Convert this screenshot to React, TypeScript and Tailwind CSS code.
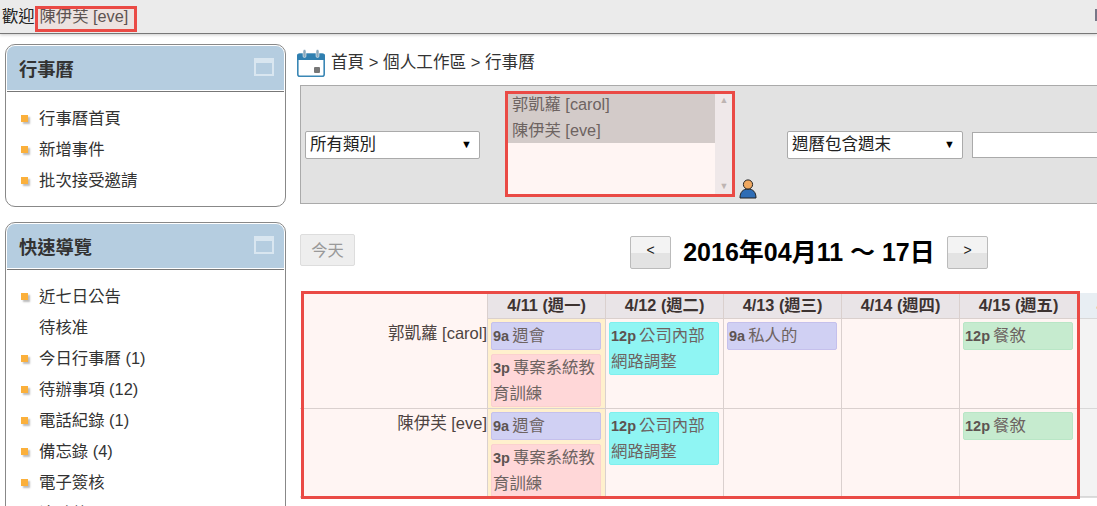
const cjk = "font-['Liberation_Sans','Noto_Sans_CJK_TC',sans-serif]";

function PanelIcon() {
  return (
    <span className="w-[20px] h-[18px] mb-[3px] border-2 border-[#d9e6f0] flex flex-col">
      <span className="h-[3px] bg-[#d9e6f0]" />
    </span>
  );
}

function Panel({ title, items, className }: { title: string; items: { label: string; noBullet?: boolean }[]; className?: string }) {
  return (
    <div className={`w-[281px] border border-[#888] rounded-[10px] bg-white p-px ${className ?? ''}`}>
      <div className="h-[44px] bg-[#b5cde0] rounded-t-[8px] flex items-center justify-between pl-[12px] pr-[10px]">
        <span className="text-[18.3px] font-bold text-[#333] pt-[3px]">{title}</span>
        <PanelIcon />
      </div>
      <div className="border-t border-[#777] mt-px pt-[11px] pb-[9px] pl-[14px]">
        {items.map((item) => (
          <div key={item.label} className="h-[31px] flex items-center text-[16.4px] text-[#333]">
            <span className={`w-[7px] h-[7px] mr-[11px] ${item.noBullet ? '' : 'bg-[#fbb03b] shadow-[2px_2px_2px_#bbb]'}`} />
            {item.label}
          </div>
        ))}
      </div>
    </div>
  );
}

function CalendarIcon() {
  return (
    <svg width="28" height="28" viewBox="0 0 28 28" className="shrink-0 mt-[5px]">
      <rect x="0.8" y="5" width="26.4" height="22.2" rx="2" fill="#fff" stroke="#3a87b5" strokeWidth="1.6" />
      <path d="M0 7a2 2 0 0 1 2-2h24a2 2 0 0 1 2 2v4H0z" fill="#2f7fb0" />
      <rect x="6" y="0.5" width="3" height="8" rx="1.5" fill="#8aa9bd" stroke="#fff" strokeWidth="0.5" />
      <rect x="19" y="0.5" width="3" height="8" rx="1.5" fill="#8aa9bd" stroke="#fff" strokeWidth="0.5" />
      <rect x="17" y="18" width="6" height="6" rx="1" fill="#777" />
    </svg>
  );
}

function PersonIcon() {
  return (
    <svg width="18" height="21" viewBox="0 0 18 21">
      <path d="M1 20c0-6 3-9 8-9s8 3 8 9z" fill="#2f6db5" stroke="#222" strokeWidth="1" />
      <circle cx="9" cy="6.5" r="4.6" fill="#f0a860" stroke="#222" strokeWidth="1" />
    </svg>
  );
}

function SelectBox({ label, className }: { label: string; className?: string }) {
  return (
    <div className={`h-[28px] bg-white border border-[#aaa] rounded-[2px] flex items-center justify-between pl-[4px] pr-[7px] text-[16.5px] text-[#222] shrink-0 ${className ?? ''}`}>
      {label}
      <span className="text-[11px] text-black">▼</span>
    </div>
  );
}

function NavButton({ label }: { label: string }) {
  return (
    <button className="w-[41px] h-[33px] border border-[#bbb] rounded-[2px] bg-[linear-gradient(#f3f3f3_50%,#e3e3e3_50%)] text-[14px] text-[#222] pb-[5px] shrink-0">
      {label}
    </button>
  );
}

type CalEvent = { time: string; title: string; color: string };

// colours sit under the annotation tint, so they are a little off from what shows
const staff = 'bg-[#ced8ff] border-[#c2c8f8]';
const training = 'bg-[#ffe0e3] border-[#fbd8da]';
const network = 'bg-[#89ffff] border-[#78fafa]';
const lunch = 'bg-[#c3f5da] border-[#b6f0d0]';

const days = ['4/11 (週一)', '4/12 (週二)', '4/13 (週三)', '4/14 (週四)', '4/15 (週五)', '4/16 (週六)'];

const rows: { name: string; cells: CalEvent[][] }[] = [
  {
    name: '郭凱蘿 [carol]',
    cells: [
      [
        { time: '9a', title: '週會', color: staff },
        { time: '3p', title: '專案系統教育訓練', color: training },
      ],
      [{ time: '12p', title: '公司內部網路調整', color: network }],
      [{ time: '9a', title: '私人的', color: staff }],
      [],
      [{ time: '12p', title: '餐敘', color: lunch }],
      [],
    ],
  },
  {
    name: '陳伊芙 [eve]',
    cells: [
      [
        { time: '9a', title: '週會', color: staff },
        { time: '3p', title: '專案系統教育訓練', color: training },
      ],
      [{ time: '12p', title: '公司內部網路調整', color: network }],
      [],
      [],
      [{ time: '12p', title: '餐敘', color: lunch }],
      [],
    ],
  },
];

function cellBg(col: number) {
  if (col === 0) return 'bg-[#fffad7]';
  if (col === 5) return 'bg-[#f3f3f3]';
  return 'bg-white';
}

function Calendar() {
  return (
    <div className="mt-[26px] w-[895px] grid grid-cols-[187px_repeat(6,118px)] grid-rows-[26px_90px_88px] border-b border-[#ddd] shrink-0">
      <div className="bg-white" />
      {days.map((d) => (
        <div
          key={d}
          className="bg-[#e8eef3] border-l border-b border-[#d8d8d8] flex items-center justify-center text-[16.3px] font-bold text-[#333] whitespace-nowrap"
        >
          {d}
        </div>
      ))}
      {rows.map((row) =>
        [
          <div key={row.name} className="bg-white border-b border-[#d8d8d8] text-right text-[16.5px] leading-[24px] text-[#444] pt-[2px]">
            {row.name}
          </div>,
          ...row.cells.map((events, col) => (
            <div key={row.name + col} className={`${cellBg(col)} border-l border-b border-[#d8d8d8] pt-[3px] pl-[3px] pr-[4px] flex flex-col gap-[4px]`}>
              {events.map((ev) => (
                <div key={ev.time + ev.title} className={`${ev.color} border rounded-[2px] pl-px text-[16.4px] leading-[25px] text-[#666]`}>
                  <b className="font-bold text-[14.5px] mr-[3px] text-[#555]">{ev.time}</b>
                  {ev.title}
                </div>
              ))}
            </div>
          )),
        ]
      )}
    </div>
  );
}

export default function App() {
  return (
    <div className={`relative w-[1097px] h-[506px] overflow-hidden bg-white ${cjk}`}>
      <header className="h-[34px] bg-[#ebebeb] border-b border-[#777] shadow-[0_1px_3px_#ccc] flex items-center justify-between pl-[2px] text-[16.3px] text-[#222]">
        <div className="flex gap-[5px]">
          <span>歡迎</span>
          <span className="text-[#555]">陳伊芙 [eve]</span>
        </div>
        <span className="w-[2px] h-[12px] bg-[#778] mb-[4px]" />
      </header>

      <div className="flex pl-[5px] pt-[10px]">
        <aside className="shrink-0">
          <Panel
            title="行事曆"
            items={[{ label: '行事曆首頁' }, { label: '新增事件' }, { label: '批次接受邀請' }]}
          />
          <Panel
            className="mt-[15px]"
            title="快速導覽"
            items={[
              { label: '近七日公告' },
              { label: '待核准', noBullet: true },
              { label: '今日行事曆 (1)' },
              { label: '待辦事項 (12)' },
              { label: '電話紀錄 (1)' },
              { label: '備忘錄 (4)' },
              { label: '電子簽核' },
              { label: '塗鴉牆' },
            ]}
          />
        </aside>

        <main className="ml-[14px] min-w-0 flex-1 flex flex-col">
          <div className="h-[41px] -ml-[3px] flex items-start gap-[6px] text-[16.6px] text-[#333]">
            <CalendarIcon />
            <span className="mt-[7px]">首頁 &gt; 個人工作區 &gt; 行事曆</span>
          </div>

          <div className="w-[820px] h-[119px] bg-[#e2e2e2] border-y border-l border-[#aaa] flex items-center pl-[4px] shrink-0">
            <SelectBox label="所有類別" className="w-[175px]" />
            <div className="ml-[27px] w-[226px] h-[104px] shrink-0 bg-white flex text-[16.3px] text-[#666] leading-[26px] mb-[4px]">
              <div className="flex-1">
                <div className="bg-[#d1d3d3] pl-[5px]">郭凱蘿 [carol]</div>
                <div className="bg-[#d1d3d3] pl-[5px]">陳伊芙 [eve]</div>
              </div>
              <div className="w-[18px] bg-[#eff2f5] flex flex-col justify-between items-center py-[4px] text-[9px] leading-[10px] text-[#bbb]">
                <span>▲</span>
                <span>▼</span>
              </div>
            </div>
            <div className="self-end mb-[4px] ml-[6px] w-[18px] shrink-0">
              <PersonIcon />
            </div>
            <SelectBox label="週曆包含週末" className="ml-[30px] w-[176px]" />
            <div className="ml-[9px] w-[148px] h-[26px] bg-white border border-[#aaa] shrink-0" />
          </div>

          <div className="mt-[30px] h-[33px] flex items-start shrink-0">
            <button className="w-[55px] h-[32px] bg-[#eee] border border-[#ddd] rounded-[2px] text-[16.3px] text-[#999] shrink-0">今天</button>
            <div className="ml-[275px] flex items-center shrink-0">
              <NavButton label="<" />
              <h1 className="w-[276px] text-center text-[25px] font-bold text-black whitespace-nowrap">2016年04月11 ～ 17日</h1>
              <NavButton label=">" />
            </div>
          </div>

          <Calendar />
        </main>
      </div>

      {/* red annotation boxes laid over the page */}
      <div className="absolute left-[35px] top-[6px] w-[102px] h-[26px] border-[3px] border-[#ea4a45] bg-[#ff370f0d]" />
      <div className="absolute left-[505px] top-[91px] w-[230px] h-[106px] border-[3px] border-[#ea4a45] bg-[#ff370f0d]" />
      <div className="absolute left-[301px] top-[291px] w-[779px] h-[208px] border-[3px] border-[#ea4a45] bg-[#ff370f0d]" />
    </div>
  );
}
